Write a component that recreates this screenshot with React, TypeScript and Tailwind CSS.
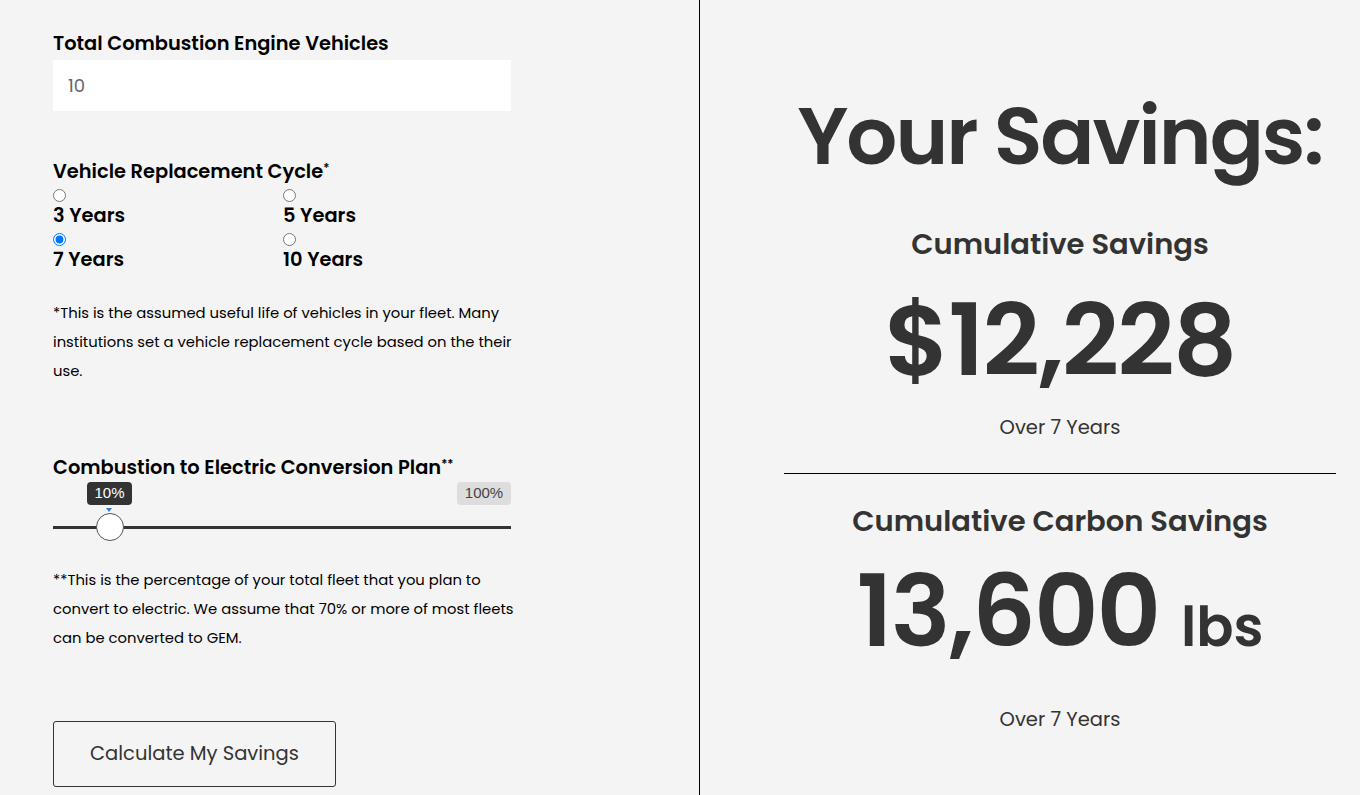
import { useState } from 'react'

const CYCLES = ['3 Years', '5 Years', '7 Years', '10 Years']

export default function App() {
  const [count, setCount] = useState('10')
  const [cycle, setCycle] = useState('7 Years')

  return (
    <div className="flex min-h-[795px] w-full bg-[#f4f4f4] text-black" style={{ fontFamily: "Poppins, Inter, 'Noto Sans', sans-serif" }}>
      {/* LEFT: FORM */}
      <div className="w-[699px] shrink-0 pl-[53px]">
        <div className="w-[458px]">
          <label className="block pt-[30px] text-[19.4px] leading-[27px] font-semibold">Total Combustion Engine Vehicles</label>
          <input
            value={count}
            onChange={e => setCount(e.target.value)}
            className="mt-[3px] block h-[51px] w-full bg-white px-[15px] text-[18px] text-[#666] outline-none"
          />

          <h3 className="mt-[47px] text-[19.4px] leading-[27px] font-semibold">
            Vehicle Replacement Cycle<sup className="text-[12px]">*</sup>
          </h3>
          <div className="grid grid-cols-[230px_1fr] gap-y-[1px]">
            {CYCLES.map(c => (
              <label key={c} className="flex flex-col items-start cursor-pointer">
                <input
                  type="radio"
                  name="cycle"
                  checked={cycle === c}
                  onChange={() => setCycle(c)}
                  className="mt-[4px] h-[13px] w-[13px]"
                />
                <span className="mt-[2px] text-[19.4px] leading-[24px] font-semibold">{c}</span>
              </label>
            ))}
          </div>

          <p className="mt-[26px] w-[468px] text-[14.8px] leading-[29px]">
            *This is the assumed useful life of vehicles in your fleet. Many institutions set a vehicle replacement cycle based on the their use.
          </p>

          <h3 className="mt-[69px] text-[19.4px] leading-[27px] font-semibold">
            Combustion to Electric Conversion Plan<sup className="text-[12px]">**</sup>
          </h3>

          {/* SLIDER */}
          <div className="relative h-[62px]" style={{ fontFamily: "'Liberation Sans', Arial, sans-serif" }}>
            <div className="absolute left-[34px] top-[1px] flex h-[23px] w-[45px] items-center justify-center rounded-[4px] bg-[#333] text-[15px] text-white">10%</div>
            <div className="absolute left-[53px] top-[27px] h-0 w-0 border-x-[3px] border-t-[4px] border-x-transparent border-t-[#2d7dd2]"></div>
            <div className="absolute right-0 top-[1px] flex h-[23px] w-[54px] items-center justify-center rounded-[4px] bg-[#dddddd] text-[15px] text-[#444]">100%</div>
            <div className="absolute left-0 right-0 top-[45px] h-[3px] bg-[#333]"></div>
            <div className="absolute left-[43px] top-[32px] h-[28px] w-[28px] rounded-full border border-[#555] bg-white"></div>
          </div>

          <p className="mt-[22px] w-[468px] text-[14.8px] leading-[29px]">
            **This is the percentage of your total fleet that you plan to convert to electric. We assume that 70% or more of most fleets can be converted to GEM.
          </p>

          <button className="mt-[69px] flex h-[66px] w-[283px] items-center justify-center rounded-[3px] border border-[#333] text-[19.5px] text-[#333]">
            Calculate My Savings
          </button>
        </div>
      </div>

      {/* RIGHT: RESULTS */}
      <div className="flex-1 border-l border-black pl-[84px] pr-[24px] text-center text-[#333]">
        <h1 className="pt-[86px] text-[80px] leading-[100px] font-semibold tracking-[-2px] whitespace-nowrap">Your Savings:</h1>
        <h2 className="mt-[40px] text-[29px] leading-[36px] font-semibold">Cumulative Savings</h2>
        <div className="mt-[23px] text-[100px] leading-[110px] font-semibold tracking-[-1.8px]">$12,228</div>
        <p className="mt-[19px] text-[19.5px] leading-[27px]">Over 7 Years</p>
        <div className="mt-[32px] h-px bg-black"></div>
        <h2 className="mt-[29px] text-[29px] leading-[36px] font-semibold">Cumulative Carbon Savings</h2>
        <div className="mt-[17px] text-[100px] leading-[110px] font-semibold tracking-[-2px]">
          13,600 <span className="text-[55px] leading-none tracking-normal">lbs</span>
        </div>
        <p className="mt-[40px] text-[19.5px] leading-[27px]">Over 7 Years</p>
      </div>
    </div>
  )
}
